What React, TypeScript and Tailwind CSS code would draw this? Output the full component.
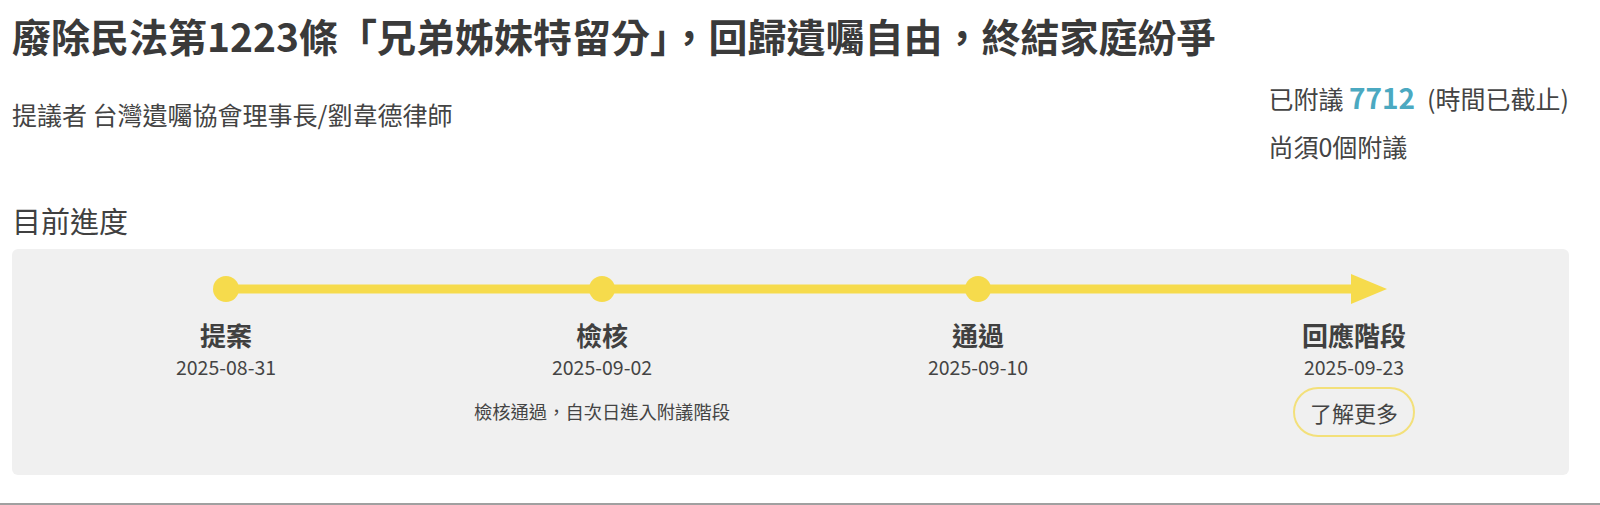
const steps = [
  { name: "提案", date: "2025-08-31" },
  { name: "檢核", date: "2025-09-02", note: "檢核通過，自次日進入附議階段" },
  { name: "通過", date: "2025-09-10" },
  { name: "回應階段", date: "2025-09-23", more: true },
];

const yellow = "#f6db4c";

function Timeline() {
  // inner width 1504, four columns of 376
  const centers = [188, 564, 940, 1316];
  return (
    <svg width="1504" height="30" viewBox="0 0 1504 30" className="block">
      <line x1={centers[0]} y1="15" x2={centers[3]} y2="15" stroke={yellow} strokeWidth="9" />
      <polygon points="1313,0 1349,15 1313,30" fill={yellow} />
      {centers.slice(0, 3).map((c) => (
        <circle key={c} cx={c} cy="15" r="13" fill={yellow} />
      ))}
    </svg>
  );
}

export default function App() {
  return (
    <div
      className="min-h-[505px] w-[1600px] bg-white text-[#404040]"
      style={{ fontFamily: '"Noto Sans CJK TC", "Noto Sans", sans-serif' }}
    >
      <div className="pl-3 pr-[31px]">
        <h1 className="pt-[7px] text-[39px] font-bold leading-[56px] text-[#3a3a3a]">
          廢除民法第1223條「兄弟姊妹特留分」，回歸遺囑自由，終結家庭紛爭
        </h1>

        <div className="mt-[10px] flex items-start justify-between">
          <p className="mt-[17px] text-[25px] leading-[48px] text-[#444]">提議者 台灣遺囑協會理事長/劉韋德律師</p>
          <div className="text-[25px] leading-[48px] text-[#444]">
            <p>
              已附議 <span className="text-[28px] font-bold text-[#4ba9c1]">7712</span>
              <span className="ml-[12px]">(時間已截止)</span>
            </p>
            <p>尚須0個附議</p>
          </div>
        </div>

        <h2 className="mt-[30px] text-[29px] leading-[40px] text-[#404040]">目前進度</h2>

        <div className="mt-[9px] rounded-md bg-[#f0f0f0] pb-[38px] pl-[26px] pr-[27px] pt-[25px]">
          <Timeline />
          <div className="grid grid-cols-4">
            {steps.map((s) => (
              <div key={s.name} className="flex flex-col items-center">
                <div className="mt-[14px] text-[26px] font-bold leading-[34px] text-[#404040]">{s.name}</div>
                <div className="mt-[1px] text-[19.5px] leading-[28px] text-[#444]">{s.date}</div>
                <div className="mt-[6px] flex h-[50px] items-center">
                  {s.note && <span className="-mt-[1px] text-[18.3px] text-[#444]">{s.note}</span>}
                  {s.more && (
                    <button className="h-[50px] w-[122px] rounded-full border-2 border-[#f3e07a] text-[22px] text-[#444]">
                      了解更多
                    </button>
                  )}
                </div>
              </div>
            ))}
          </div>
        </div>
      </div>
      <div className="mt-[28px] h-[2px] bg-[#a0a0a0]" />
    </div>
  );
}
